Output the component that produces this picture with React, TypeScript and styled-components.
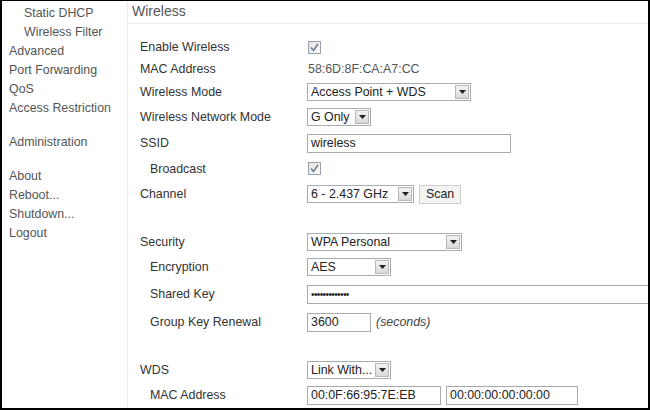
import React from "react";
import styled, { createGlobalStyle } from "styled-components";

const Global = createGlobalStyle`
  html, body { margin: 0; padding: 0; background: #fff; }
  body { font-family: "Liberation Sans", Arial, sans-serif; font-size: 12.4px; }
`;

const Frame = styled.div`
  width: 650px;
  height: 410px;
  box-sizing: border-box;
  border-top: 1px solid #000;
  border-left: 2px solid #000;
  border-right: 2px solid #000;
  border-bottom: 2px solid #000;
  display: grid;
  grid-template-columns: 126px 1fr;
  overflow: hidden;
  background: #fff;
`;

const Sidebar = styled.nav`
  border-right: 1px solid #ececec;
  display: flex;
  flex-direction: column;
  padding-top: 3px;
  color: #555;
`;

const NavItem = styled.div<{ $indent?: boolean; $gap?: number }>`
  height: 19px;
  line-height: 19px;
  padding-left: ${({ $indent }) => ($indent ? 22 : 7)}px;
  margin-top: ${({ $gap }) => $gap ?? 0}px;
  white-space: nowrap;
`;

const Main = styled.main`
  display: flex;
  flex-direction: column;
  min-width: 0;
`;

const Title = styled.h2`
  margin: 0;
  height: 22px;
  line-height: 20px;
  padding-left: 4px;
  font-size: 14px;
  font-weight: normal;
  color: #555;
  border-bottom: 1px solid #ececec;
`;

const Form = styled.div`
  padding: 12px 0 0 12px;
  display: flex;
  flex-direction: column;
  color: #333;
`;

const Row = styled.div<{ $h: number; $gap?: number }>`
  display: grid;
  grid-template-columns: 168px 1fr;
  align-items: center;
  height: ${({ $h }) => $h}px;
  margin-top: ${({ $gap }) => $gap ?? 0}px;
`;

const Label = styled.div<{ $indent?: boolean }>`
  padding-left: ${({ $indent }) => ($indent ? 10 : 0)}px;
  white-space: nowrap;
`;

const Field = styled.div`
  display: flex;
  align-items: center;
  gap: 5px;
  white-space: nowrap;
  margin-left: -1px;
`;

const Plain = styled.span`
  padding-left: 1px;
  color: #555;
`;

const Check = styled.span`
  width: 11px;
  height: 11px;
  border: 1px solid #9aa3ab;
  background: linear-gradient(135deg, #e4e4e4, #fafafa);
  display: inline-flex;
  align-items: center;
  justify-content: center;
  margin-left: 1px;
`;

const SelectBox = styled.div<{ $w: number }>`
  width: ${({ $w }) => $w}px;
  height: 18px;
  box-sizing: border-box;
  border: 1px solid #a5acb2;
  background: #fff;
  display: flex;
  align-items: center;
  justify-content: space-between;
  padding: 0 1px 0 3px;
  color: #222;
`;

const Arrow = styled.span`
  width: 14px;
  height: 14px;
  box-sizing: border-box;
  border: 1px solid #b8b8b8;
  background: linear-gradient(#f2f2f2, #d9d9d9);
  display: inline-flex;
  align-items: center;
  justify-content: center;
`;

const TextBox = styled.div<{ $w: number }>`
  width: ${({ $w }) => $w}px;
  height: 19px;
  box-sizing: border-box;
  border: 1px solid #aaaaaa;
  background: #fff;
  display: flex;
  align-items: center;
  padding-left: 3px;
  color: #222;
  overflow: hidden;
`;

const Dots = styled.span`
  font-size: 10px;
  letter-spacing: -0.6px;
  color: #222;
`;

const Button = styled.button`
  height: 19px;
  padding: 0 6px;
  border: 1px solid #cfcfcf;
  background: #f3f3f3;
  font: inherit;
  color: #222;
`;

const Note = styled.span`
  font-style: italic;
  color: #444;
`;

const CheckMark = () => (
  <svg width="9" height="9" viewBox="0 0 9 9">
    <path d="M1 4.5 L3.5 7.5 L8 1" fill="none" stroke="#6f7f8f" strokeWidth="1.6" />
  </svg>
);

const Select = ({ w, value }: { w: number; value: string }) => (
  <SelectBox $w={w}>
    <span>{value}</span>
    <Arrow>
      <svg width="7" height="4" viewBox="0 0 7 4">
        <path d="M0 0 H7 L3.5 4 Z" fill="#222" />
      </svg>
    </Arrow>
  </SelectBox>
);

const App: React.FC = () => {
  return (
    <>
      <Global />
      <Frame>
        <Sidebar>
          <NavItem $indent>Static DHCP</NavItem>
          <NavItem $indent>Wireless Filter</NavItem>
          <NavItem>Advanced</NavItem>
          <NavItem>Port Forwarding</NavItem>
          <NavItem>QoS</NavItem>
          <NavItem>Access Restriction</NavItem>
          <NavItem $gap={15}>Administration</NavItem>
          <NavItem $gap={15}>About</NavItem>
          <NavItem>Reboot...</NavItem>
          <NavItem>Shutdown...</NavItem>
          <NavItem>Logout</NavItem>
        </Sidebar>
        <Main>
          <Title>Wireless</Title>
          <Form>
            <Row $h={22}>
              <Label>Enable Wireless</Label>
              <Field><Check><CheckMark /></Check></Field>
            </Row>
            <Row $h={22}>
              <Label>MAC Address</Label>
              <Field><Plain>58:6D:8F:CA:A7:CC</Plain></Field>
            </Row>
            <Row $h={24}>
              <Label>Wireless Mode</Label>
              <Field><Select w={164} value="Access Point + WDS" /></Field>
            </Row>
            <Row $h={26}>
              <Label>Wireless Network Mode</Label>
              <Field><Select w={64} value="G Only" /></Field>
            </Row>
            <Row $h={26}>
              <Label>SSID</Label>
              <Field><TextBox $w={204}>wireless</TextBox></Field>
            </Row>
            <Row $h={25}>
              <Label $indent>Broadcast</Label>
              <Field><Check><CheckMark /></Check></Field>
            </Row>
            <Row $h={26}>
              <Label>Channel</Label>
              <Field>
                <Select w={107} value="6 - 2.437 GHz" />
                <Button>Scan</Button>
              </Field>
            </Row>
            <Row $h={24} $gap={23}>
              <Label>Security</Label>
              <Field><Select w={155} value="WPA Personal" /></Field>
            </Row>
            <Row $h={26}>
              <Label $indent>Encryption</Label>
              <Field><Select w={84} value="AES" /></Field>
            </Row>
            <Row $h={28}>
              <Label $indent>Shared Key</Label>
              <Field><TextBox $w={360}><Dots>•••••••••••••</Dots></TextBox></Field>
            </Row>
            <Row $h={28}>
              <Label $indent>Group Key Renewal</Label>
              <Field>
                <TextBox $w={64}>3600</TextBox>
                <Note>(seconds)</Note>
              </Field>
            </Row>
            <Row $h={24} $gap={22}>
              <Label>WDS</Label>
              <Field><Select w={84} value="Link With..." /></Field>
            </Row>
            <Row $h={26}>
              <Label $indent>MAC Address</Label>
              <Field>
                <TextBox $w={134}>00:0F:66:95:7E:EB</TextBox>
                <TextBox $w={132}>00:00:00:00:00:00</TextBox>
              </Field>
            </Row>
          </Form>
        </Main>
      </Frame>
    </>
  );
};

export default App;
